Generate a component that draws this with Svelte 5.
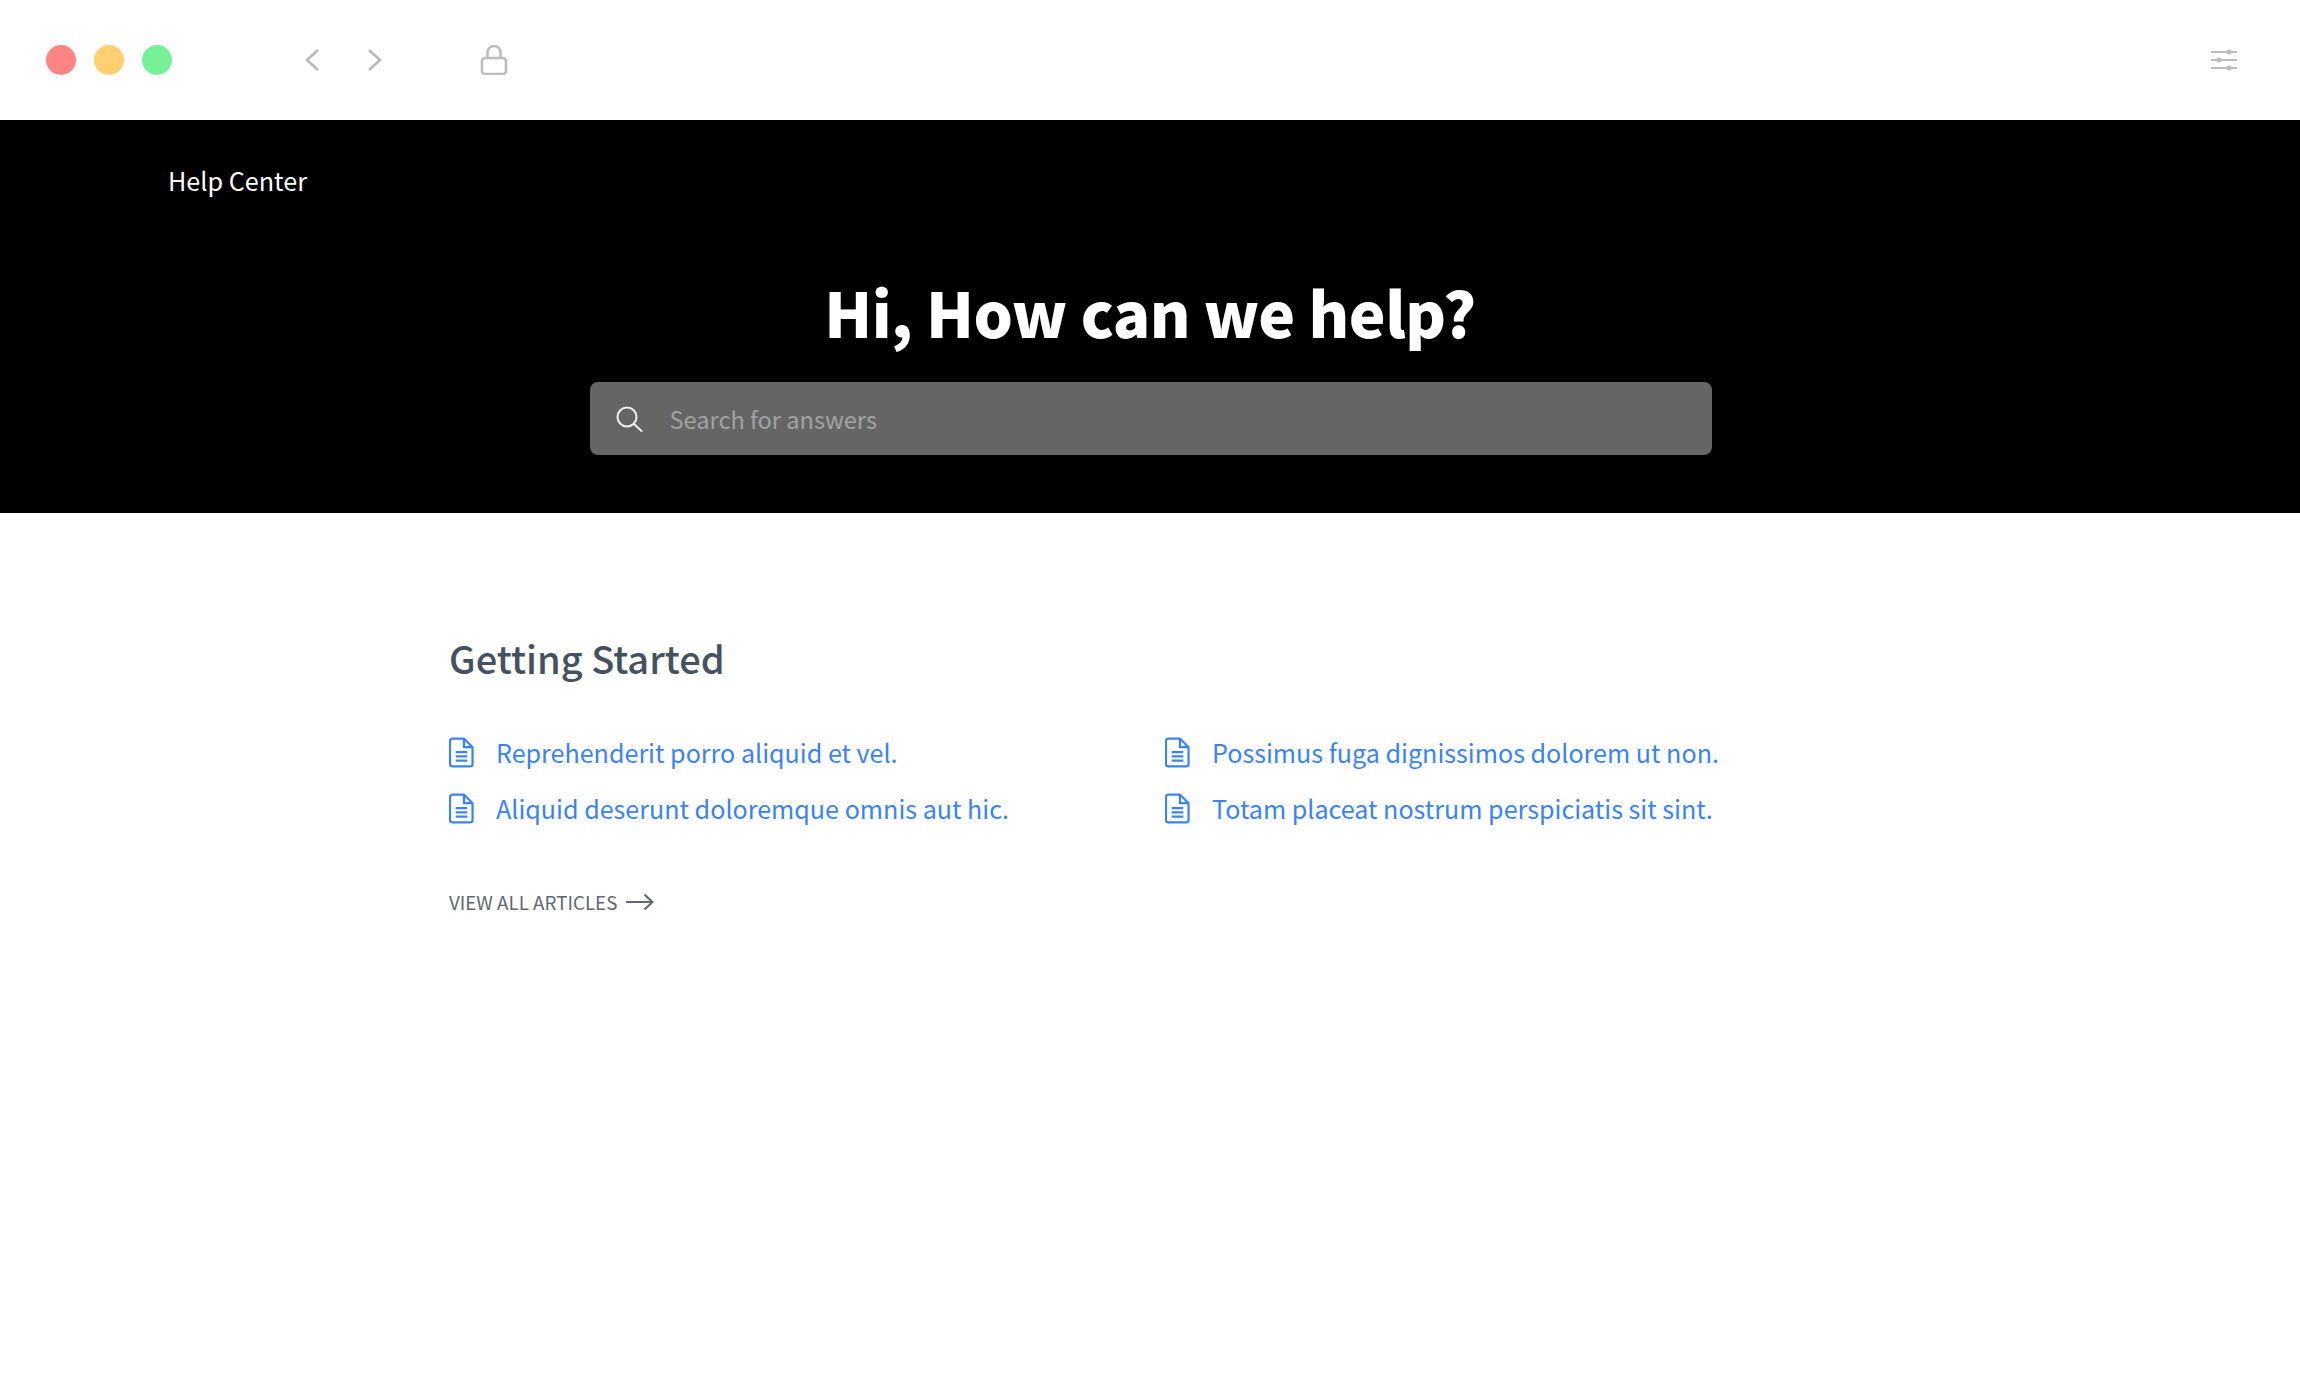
<script>
  const articles = [
    'Reprehenderit porro aliquid et vel.',
    'Possimus fuga dignissimos dolorem ut non.',
    'Aliquid deserunt doloremque omnis aut hic.',
    'Totam placeat nostrum perspiciatis sit sint.'
  ];
</script>

<div class="page">
  <header class="chrome">
    <div class="dots">
      <span class="dot red"></span>
      <span class="dot yellow"></span>
      <span class="dot green"></span>
    </div>
    <div class="nav">
      <svg width="16" height="24" viewBox="0 0 16 24" fill="none" stroke="#b9b9b9" stroke-width="2.6"><path d="M14 2 3 12l11 10" /></svg>
      <svg width="16" height="24" viewBox="0 0 16 24" fill="none" stroke="#b9b9b9" stroke-width="2.6"><path d="M2 2l11 10L2 22" /></svg>
    </div>
    <svg class="lock" width="28" height="30" viewBox="0 0 28 30" fill="none" stroke="#bdbdbd" stroke-width="2.6">
      <rect x="2" y="13" width="24" height="16" rx="3" />
      <path d="M7.500 13V7.500a6.500 6.500 0 0 1 13 0V13" />
    </svg>
    <svg class="sliders" width="26" height="24" viewBox="0 0 26 24" fill="#bdbdbd">
      <rect x="0" y="3" width="26" height="2" />
      <rect x="0" y="11" width="26" height="2" />
      <rect x="0" y="19" width="26" height="2" />
      <circle cx="18" cy="4" r="2.500" />
      <circle cx="8" cy="12" r="2.500" />
      <circle cx="18" cy="20" r="2.500" />
    </svg>
  </header>

  <section class="hero">
    <div class="brand">Help Center</div>
    <h1>Hi, How can we help?</h1>
    <div class="search">
      <svg width="28" height="28" viewBox="0 0 28 28" fill="none" stroke="#f0f0f0" stroke-width="2">
        <circle cx="12" cy="12" r="9.500" />
        <path d="M19 19l7.500 7" stroke-linecap="round" />
      </svg>
      <span class="placeholder">Search for answers</span>
    </div>
  </section>

  <main class="content">
    <h2>Getting Started</h2>
    <div class="grid">
      {#each articles as article}
        <a class="item" href="#top">
          <svg width="25" height="31" viewBox="0 0 26 32" fill="none" stroke="#3b82f6" stroke-width="2.300" stroke-linejoin="round">
            <path d="M3.500 1.500h12l9 9v17.500a2.500 2.500 0 0 1-2.500 2.500h-18.500a2.500 2.500 0 0 1-2.500-2.500v-24a2.500 2.500 0 0 1 2.500-2.500z" />
            <path d="M15.500 1.500v9h9" />
            <path d="M7 15.500h12M7 20h12M7 24.500h12" />
          </svg>
          <span>{article}</span>
        </a>
      {/each}
    </div>
    <a class="all" href="#top">
      <span>VIEW ALL ARTICLES</span>
      <svg width="28" height="18" viewBox="0 0 28 18" fill="none" stroke="#5f6872" stroke-width="2"><path d="M0 9h26M18.500 1.500 26.500 9l-8 7.500" /></svg>
    </a>
  </main>
</div>

<style>
  :global(body) {
    margin: 0;
    background: #fff;
  }
  .page {
    height: 1384px;
    overflow: hidden;
    font-family: "Noto Sans CJK JP", "Noto Sans", sans-serif;
  }
  .chrome {
    height: 120px;
    display: flex;
    align-items: center;
    padding: 0 63px 0 46px;
    box-sizing: border-box;
  }
  .dots {
    display: flex;
    gap: 18px;
  }
  .dot {
    width: 30px;
    height: 30px;
    border-radius: 50%;
  }
  .red { background: #ff8585; }
  .yellow { background: #ffcf72; }
  .green { background: #78f098; }
  .nav {
    display: flex;
    gap: 47px;
    margin-left: 132px;
  }
  .lock { margin-left: 97px; }
  .sliders { margin-left: auto; }
  .hero {
    height: 393px;
    background: #000;
    color: #fff;
    display: flex;
    flex-direction: column;
    align-items: center;
  }
  .brand {
    align-self: flex-start;
    margin: 38px 0 0 168px;
    font-size: 25.200px;
    line-height: 44px;
    font-weight: 400;
  }
  h1 {
    margin: 63px 0 0;
    font-size: 62px;
    font-weight: 900;
    line-height: 92px;
    letter-spacing: -0.500px;
  }
  .search {
    box-sizing: border-box;
    width: 1122px;
    height: 73px;
    margin-top: 25px;
    margin-left: 1px;
    padding: 0 26px 0 25px;
    display: flex;
    align-items: center;
    gap: 27px;
    background: #656565;
    border-radius: 8px;
  }
  .placeholder {
    color: #a2a2a2;
    font-size: 23.600px;
  }
  .content {
    padding: 113px 0 0 449px;
  }
  h2 {
    margin: 0;
    color: #45515e;
    font-size: 38px;
    font-weight: 500;
    line-height: 64px;
  }
  .grid {
    display: grid;
    grid-template-columns: 716px 716px;
    grid-auto-rows: 56px;
    margin-top: 34px;
  }
  .item {
    display: flex;
    align-items: center;
    gap: 22px;
    color: #3b82f6;
    font-size: 25.100px;
    text-decoration: none;
  }
  .all {
    display: inline-flex;
    align-items: center;
    gap: 9px;
    margin-top: 52px;
    color: #5f6872;
    font-size: 18.800px;
    text-decoration: none;
  }
</style>
